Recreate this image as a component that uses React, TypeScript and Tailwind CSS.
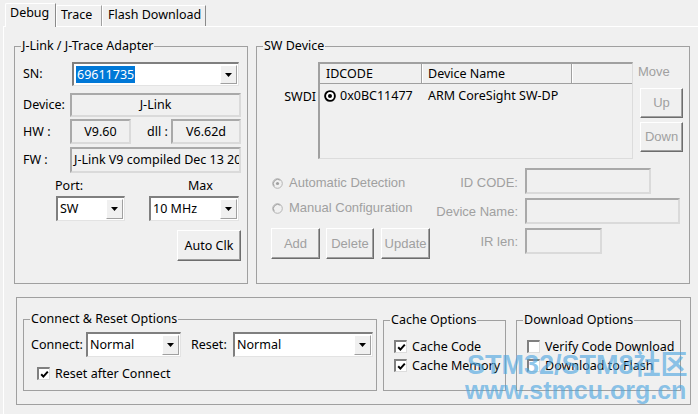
import React from "react";

type Box = { className?: string; children?: React.ReactNode };

const classic = "font-['Liberation_Sans',Arial,sans-serif] text-[13px]";

function Triangle() {
  return (
    <svg width="7" height="4" viewBox="0 0 7 4">
      <path d="M0 0H7L3.5 4Z" fill="#000" />
    </svg>
  );
}

function Group({ title, className = "", children }: Box & { title: string }) {
  return (
    <div className={`relative border border-[#a0a0a0] ${className}`}>
      <span className="absolute left-[6px] top-[-9px] bg-[#f0f0f0] px-[1px] leading-[16px] whitespace-nowrap">
        {title}
      </span>
      {children}
    </div>
  );
}

function Combo({ className = "", children }: Box) {
  return (
    <div
      className={`flex bg-white border-t-2 border-l-2 border-r border-b border-t-[#7f7f7f] border-l-[#7f7f7f] border-r-[#e3e3e3] border-b-[#e3e3e3] ${className}`}
    >
      <div className="flex flex-1 items-center overflow-hidden whitespace-nowrap pl-[2px]">{children}</div>
      <div className="my-[1px] mr-[1px] flex w-[17px] items-center justify-center bg-[#f0f0f0] border border-t-white border-l-white border-r-[#a0a0a0] border-b-[#a0a0a0]">
        <Triangle />
      </div>
    </div>
  );
}

function Field({ className = "", children }: Box) {
  return (
    <div
      className={`flex items-center overflow-hidden whitespace-nowrap border-2 border-t-[#a9a9a9] border-l-[#a9a9a9] border-r-[#dadada] border-b-[#dadada] ${className}`}
    >
      {children}
    </div>
  );
}

function Btn({ className = "", disabled, children }: Box & { disabled?: boolean }) {
  return (
    <div
      className={`flex items-center justify-center bg-[#f0f0f0] border border-t-white border-l-white border-r-[#6d6d6d] border-b-[#6d6d6d] shadow-[inset_-1px_-1px_0_#a0a0a0] ${
        disabled ? `text-[#a0a0a0] ${classic}` : "text-black"
      } ${className}`}
    >
      {children}
    </div>
  );
}

function Check({ checked }: { checked?: boolean }) {
  return (
    <div className="flex h-[13px] w-[13px] shrink-0 items-center justify-center bg-white border-t-2 border-l-2 border-r border-b border-t-[#808080] border-l-[#808080] border-r-[#dcdcdc] border-b-[#dcdcdc]">
      {checked && (
        <svg width="9" height="9" viewBox="0 0 9 9">
          <path d="M1.2 4.2 L3.4 6.6 L7.8 1.6" stroke="#000" strokeWidth="2" fill="none" />
        </svg>
      )}
    </div>
  );
}

function CheckRow({ checked, label, className = "" }: { checked?: boolean; label: string; className?: string }) {
  return (
    <div className={`flex h-[13px] items-center ${className}`}>
      <Check checked={checked} />
      <span className="ml-[5px] whitespace-nowrap leading-[16px]">{label}</span>
    </div>
  );
}

function ListRadio() {
  return (
    <svg width="12" height="12" viewBox="0 0 12 12">
      <circle cx="6" cy="6" r="4.9" fill="#fff" stroke="#000" strokeWidth="1.9" />
      <circle cx="6" cy="6" r="2" fill="#000" />
    </svg>
  );
}

function GreyRadio({ on }: { on?: boolean }) {
  return (
    <svg width="11" height="11" viewBox="0 0 11 11">
      <circle cx="5.5" cy="5.5" r="4.8" fill="#f0f0f0" stroke="#b4b4b4" strokeWidth="1" />
      <path d="M2.2 8.2 A4.3 4.3 0 0 1 8.2 2.2" stroke="#a0a0a0" strokeWidth="1" fill="none" />
      {on && <circle cx="5.5" cy="5.5" r="1.6" fill="#a0a0a0" />}
    </svg>
  );
}

function Tabs() {
  return (
    <div className="flex h-[26px] items-end pl-[5px]">
      <div className="relative z-10 -mb-px h-[24px] w-[51px] bg-[#f0f0f0] border-l border-t border-r border-t-white border-l-white border-r-[#8a8a8a] pl-[4px] pt-[1px] rounded-tl-[2px]">
        Debug
      </div>
      <div className="h-[21px] w-[46px] bg-[#f0f0f0] border-l border-t border-r border-t-white border-l-white border-r-[#a0a0a0] pl-[4px] pt-[1px]">
        Trace
      </div>
      <div className="h-[21px] w-[104px] bg-[#f0f0f0] border-l border-t border-r border-t-white border-l-white border-r-[#8a8a8a] pl-[5px] pt-[1px] whitespace-nowrap">
        Flash Download
      </div>
    </div>
  );
}

function AdapterGroup() {
  return (
    <Group title="J-Link / J-Trace Adapter" className="h-[238px] w-[234px] shrink-0">
      <div className="flex flex-col">
        <div className="mt-[15px] flex h-[24px] items-center">
          <span className="w-[57px] pl-[8px]">SN:</span>
          <Combo className="h-[24px] w-[167px]">
            <span className="bg-[#0078d7] px-[1px] leading-[17px] text-white">69611735</span>
          </Combo>
        </div>
        <div className="mt-[7px] flex h-[24px] items-center">
          <span className="w-[55px] pl-[8px]">Device:</span>
          <Field className="h-[24px] w-[171px] justify-center">J-Link</Field>
        </div>
        <div className="mt-[2px] flex h-[25px] items-center">
          <span className="w-[55px] pl-[8px]">HW :</span>
          <Field className="h-[25px] w-[61px] justify-center">V9.60</Field>
          <span className="ml-[16px] w-[24px] whitespace-nowrap">dll :</span>
          <Field className="h-[25px] w-[70px] justify-center">V6.62d</Field>
        </div>
        <div className="mt-[3px] flex h-[26px] items-center">
          <span className="w-[55px] pl-[8px]">FW :</span>
          <Field className="h-[26px] w-[171px] pl-[2px]">J-Link V9 compiled Dec 13 2015 11:14:50</Field>
        </div>
        <div className="mt-[5px] flex h-[16px] items-center">
          <span className="w-[173px] pl-[40px]">Port:</span>
          <span>Max</span>
        </div>
        <div className="mt-[2px] flex h-[25px] items-center pl-[41px]">
          <Combo className="h-[25px] w-[69px]">SW</Combo>
          <Combo className="ml-[24px] h-[25px] w-[90px]">10 MHz</Combo>
        </div>
        <Btn className="ml-[162px] mt-[9px] h-[31px] w-[64px]">Auto Clk</Btn>
      </div>
    </Group>
  );
}

function DeviceList() {
  return (
    <div className="flex h-[97px] w-[315px] flex-col bg-[#f0f0f0] border-t-2 border-l-2 border-r border-b border-t-[#a0a0a0] border-l-[#a0a0a0] border-r-[#dcdcdc] border-b-[#dcdcdc]">
      <div className="flex h-[20px] border-b border-b-[#a0a0a0]">
        <div className="flex w-[102px] items-center border-r border-r-[#a0a0a0] pl-[6px]">IDCODE</div>
        <div className="flex w-[150px] items-center border-r border-r-[#a0a0a0] border-l border-l-white pl-[5px]">
          Device Name
        </div>
        <div className="flex-1 border-l border-l-white" />
      </div>
      <div className="flex h-[23px] items-center">
        <div className="flex w-[108px] items-center pl-[4px]">
          <ListRadio />
          <span className="ml-[4px]">0x0BC11477</span>
        </div>
        <span className="whitespace-nowrap">ARM CoreSight SW-DP</span>
      </div>
    </div>
  );
}

function DeviceGroup() {
  return (
    <Group title="SW Device" className="h-[238px] w-[434px] shrink-0">
      <div className="mt-[15px] flex">
        <div className="w-[61px] pr-[2px] pt-[27px] text-right">SWDI</div>
        <DeviceList />
        <div className={`ml-[5px] flex flex-col ${classic}`}>
          <span className="mt-[2px] text-[#a0a0a0]">Move</span>
          <Btn disabled className="ml-[2px] mt-[8px] h-[30px] w-[43px]">
            Up
          </Btn>
          <Btn disabled className="ml-[2px] mt-[4px] h-[30px] w-[43px]">
            Down
          </Btn>
        </div>
      </div>
      <div className={`mt-[9px] flex text-[#a0a0a0] ${classic}`}>
        <div className="flex w-[173px] flex-col pl-[14px]">
          <div className="mt-[7px] flex h-[16px] items-center pl-[1px]">
            <GreyRadio on />
            <span className="ml-[6px] whitespace-nowrap">Automatic Detection</span>
          </div>
          <div className="mt-[9px] flex h-[16px] items-center pl-[1px]">
            <GreyRadio />
            <span className="ml-[6px] whitespace-nowrap">Manual Configuration</span>
          </div>
          <div className="mt-[12px] flex">
            <Btn disabled className="h-[31px] w-[57px]">
              Add
            </Btn>
            <Btn disabled className="ml-[6px] h-[31px] w-[56px]">
              Delete
            </Btn>
            <Btn disabled className="ml-[7px] h-[31px] w-[57px]">
              Update
            </Btn>
          </div>
        </div>
        <div className="flex flex-col">
          <div className="flex h-[26px] items-center">
            <span className="mt-[4px] w-[88px] text-right">ID CODE:</span>
            <Field className="ml-[7px] h-[26px] w-[126px]" />
          </div>
          <div className="mt-[4px] flex h-[26px] items-center">
            <span className="mt-[1px] w-[88px] text-right whitespace-nowrap">Device Name:</span>
            <Field className="ml-[7px] h-[26px] w-[155px]" />
          </div>
          <div className="mt-[4px] flex h-[26px] items-center">
            <span className="mt-[2px] w-[88px] text-right">IR len:</span>
            <Field className="ml-[7px] h-[26px] w-[77px]" />
          </div>
        </div>
      </div>
    </Group>
  );
}

function OptionsPanel() {
  return (
    <div className="ml-[2px] mt-[13px] flex h-[108px] w-[675px] items-start border border-[#a0a0a0] pl-[6px] pt-[21px]">
      <Group title="Connect & Reset Options" className="h-[72px] w-[354px] shrink-0">
        <div className="mt-[12px] flex h-[25px] items-center pl-[7px]">
          <span className="w-[55px]">Connect:</span>
          <Combo className="h-[25px] w-[95px]">Normal</Combo>
          <span className="ml-[10px] w-[42px]">Reset:</span>
          <Combo className="h-[25px] w-[140px]">Normal</Combo>
        </div>
        <CheckRow checked label="Reset after Connect" className="ml-[13px] mt-[10px]" />
      </Group>
      <Group title="Cache Options" className="ml-[6px] mt-[1px] h-[71px] w-[123px] shrink-0">
        <CheckRow checked label="Cache Code" className="ml-[10px] mt-[19px]" />
        <CheckRow checked label="Cache Memory" className="ml-[10px] mt-[6px]" />
      </Group>
      <Group title="Download Options" className="ml-[10px] mt-[1px] h-[71px] w-[165px] shrink-0">
        <CheckRow label="Verify Code Download" className="ml-[10px] mt-[19px]" />
        <CheckRow label="Download to Flash" className="ml-[10px] mt-[6px]" />
      </Group>
    </div>
  );
}

export default function App() {
  return (
    <div className="relative h-[414px] w-[698px] select-none overflow-hidden bg-[#f0f0f0] font-['Noto_Sans',sans-serif] text-[12.5px] leading-[16px] text-black">
      <Tabs />
      <div className="ml-[3px] h-[388px] border-l border-t border-l-white border-t-white pl-[10px] pt-[19px]">
        <div className="flex gap-[8px]">
          <AdapterGroup />
          <DeviceGroup />
        </div>
        <OptionsPanel />
      </div>
      {/* site watermark stamped over the lower right corner */}
      <div className="pointer-events-none absolute left-[465px] top-[352px] font-['Liberation_Sans','Noto_Sans_CJK_SC',sans-serif] font-bold text-[#4da6e0]/65">
        <div className="pl-[2px] text-[27px] leading-[27px] whitespace-nowrap">STM32/STM8社区</div>
        <div className="-mt-[1px] text-[25px] leading-[25px] whitespace-nowrap">www.stmcu.org.cn</div>
      </div>
    </div>
  );
}
